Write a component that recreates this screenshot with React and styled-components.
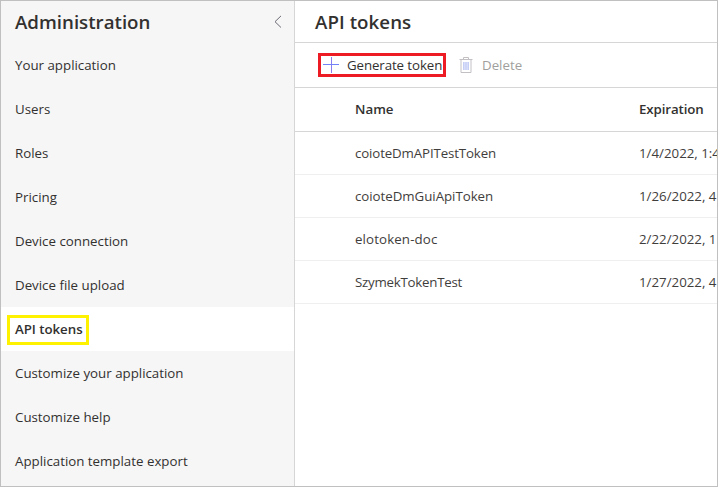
import React from "react";
import styled, { createGlobalStyle } from "styled-components";

const GlobalStyle = createGlobalStyle`
  *, *::before, *::after { box-sizing: border-box; }
  body { margin: 0; background: #fff; }
  button { font: inherit; color: inherit; background: none; border: 0; padding: 0; }
`;

const Frame = styled.div`
  display: flex;
  width: 718px;
  height: 487px;
  border: 1px solid #c0c0c0;
  overflow: hidden;
  background: #fff;
  color: #323130;
  font: 400 13.3px/20px "Open Sans", "Segoe UI", sans-serif;
  white-space: nowrap;
`;

const Sidebar = styled.aside`
  flex: 0 0 293px;
  background: #f6f6f6;
`;

const SidebarHeader = styled.div`
  display: flex;
  align-items: center;
  justify-content: space-between;
  height: 42px;
  padding: 0 12px 0 14px;
`;

const Title = styled.h1`
  margin: 0;
  font-size: 18.7px;
  line-height: 26px;
  font-weight: 600;
  letter-spacing: ${(p) => p.$tracking || 0}px;
`;

const Nav = styled.nav`
  display: flex;
  flex-direction: column;
`;

const NavItem = styled.a`
  display: flex;
  align-items: center;
  height: 44px;
  padding-top: ${(p) => (p.$active ? 2 : 0)}px;
  padding-left: ${(p) => (p.$active ? 6 : 14)}px;
  background: ${(p) => (p.$active ? "#fff" : "transparent")};
  font-weight: ${(p) => (p.$active ? 600 : 400)};
`;

const Label = styled.span`
  letter-spacing: ${(p) => p.$tracking || 0}px;
`;

const YellowMark = styled.span`
  display: flex;
  align-items: center;
  width: 82px;
  height: 30px;
  padding: 0 0 2px 5px;
  border: 3px solid #fff200;
`;

const Main = styled.main`
  flex: 1;
  min-width: 0;
  border-left: 1px solid #d6d6d6;
`;

const PageHeader = styled.header`
  display: flex;
  align-items: center;
  height: 42px;
  padding-left: 20px;
  border-bottom: 1px solid #d6d6d6;
`;

const Toolbar = styled.div`
  display: flex;
  align-items: center;
  height: 45px;
  padding-left: 23px;
  border-bottom: 1px solid #d6d6d6;
`;

const GenerateButton = styled.button`
  display: flex;
  align-items: center;
  gap: 8px;
  width: 128px;
  height: 24px;
  padding-left: 2px;
  border: 3px solid #ed1c24;
`;

const DeleteButton = styled.button`
  display: flex;
  align-items: center;
  gap: 9px;
  margin-left: 13px;
  color: #a19f9d;
`;

const Row = styled.div`
  display: grid;
  grid-template-columns: 284px 1fr;
  align-items: center;
  height: ${(p) => (p.$head ? 44 : 43)}px;
  padding-left: 60px;
  padding-bottom: ${(p) => (p.$head ? 1 : 0)}px;
  border-bottom: 1px solid ${(p) => (p.$head ? "#d6d6d6" : "#efefef")};
  font-weight: ${(p) => (p.$head ? 600 : 400)};
  color: ${(p) => (p.$head ? "#323130" : "#3f3e3d")};
`;

const Cell = styled.span`
  letter-spacing: ${(p) => p.$tracking || 0}px;
`;

const ChevronLeft = () => (
  <svg width="8" height="14" viewBox="0 0 8 14" fill="none" stroke="#6b6a75" strokeWidth="1">
    <path d="M7 .9 1 6.7l6 5.8" />
  </svg>
);

const Plus = () => (
  <svg width="16" height="16" viewBox="0 0 16 16" shapeRendering="crispEdges">
    <path d="M8 0h1v16H8z" fill="#8a7cf0" />
    <path d="M0 7h16v1H0z" fill="#7183f6" />
  </svg>
);

const Trash = () => (
  <svg width="14" height="16" viewBox="0 0 14 16" fill="none" stroke="#c3c0c4">
    <path d="M.5 2.5h13M4.5 2V.5h5V2M2 3v12.5h10V3" />
    <path d="M4 5h1.4v8H4zM6.3 5h1.4v8H6.3zM8.6 5H10v8H8.6z" fill="#aebcf0" stroke="none" />
    <path d="M4 5h6v8H4z" fill="#d3dbf8" fillOpacity=".6" stroke="none" />
  </svg>
);

const navItems = [
  "Your application",
  "Users",
  "Roles",
  "Pricing",
  "Device connection",
  "Device file upload",
  "API tokens",
  "Customize your application",
  "Customize help",
  "Application template export",
];

const tokens = [
  { name: "coioteDmAPITestToken", tracking: -0.14, expiration: "1/4/2022, 1:4" },
  { name: "coioteDmGuiApiToken", tracking: -0.04, expiration: "1/26/2022, 4" },
  { name: "elotoken-doc", tracking: 0.12, expiration: "2/22/2022, 1" },
  { name: "SzymekTokenTest", tracking: -0.25, expiration: "1/27/2022, 4" },
];

export default function App() {
  return (
    <>
      <GlobalStyle />
      <Frame>
        <Sidebar>
          <SidebarHeader>
            <Title>Administration</Title>
            <ChevronLeft />
          </SidebarHeader>
          <Nav>
            {navItems.map((text) => {
              const active = text === "API tokens";
              return (
                <NavItem key={text} $active={active}>
                  {active ? (
                    <YellowMark>
                      <Label $tracking={-0.05}>{text}</Label>
                    </YellowMark>
                  ) : (
                    <Label>{text}</Label>
                  )}
                </NavItem>
              );
            })}
          </Nav>
        </Sidebar>
        <Main>
          <PageHeader>
            <Title $tracking={0.06}>API tokens</Title>
          </PageHeader>
          <Toolbar>
            <GenerateButton>
              <Plus />
              <Label $tracking={-0.1}>Generate token</Label>
            </GenerateButton>
            <DeleteButton>
              <Trash />
              <Label>Delete</Label>
            </DeleteButton>
          </Toolbar>
          <Row $head>
            <Cell>Name</Cell>
            <Cell $tracking={-0.1}>Expiration</Cell>
          </Row>
          {tokens.map(({ name, tracking, expiration }) => (
            <Row key={name}>
              <Cell $tracking={tracking}>{name}</Cell>
              <Cell>{expiration}</Cell>
            </Row>
          ))}
        </Main>
      </Frame>
    </>
  );
}
